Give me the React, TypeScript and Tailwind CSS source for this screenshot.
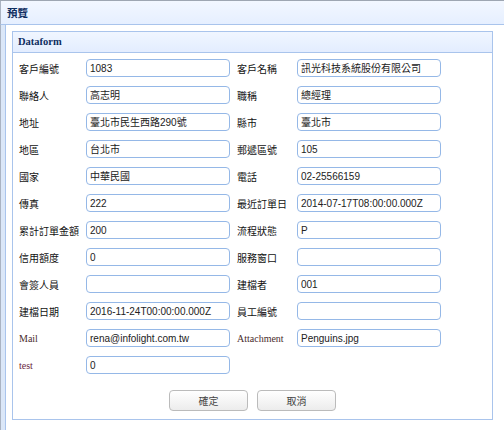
const cjk = "font-['Noto_Sans_CJK_TC','Noto_Sans_CJK_SC',sans-serif]"
const latin = "font-['Liberation_Sans','Noto_Sans_CJK_TC',sans-serif]"

type Field = { label: string; value: string; serif?: boolean; color?: string }

const rows: [Field, Field | null][] = [
  [{ label: '客戶編號', value: '1083' }, { label: '客戶名稱', value: '訊光科技系統股份有限公司' }],
  [{ label: '聯絡人', value: '高志明' }, { label: '職稱', value: '總經理' }],
  [{ label: '地址', value: '臺北市民生西路290號' }, { label: '縣市', value: '臺北市' }],
  [{ label: '地區', value: '台北市' }, { label: '郵遞區號', value: '105' }],
  [{ label: '國家', value: '中華民國' }, { label: '電話', value: '02-25566159' }],
  [{ label: '傳真', value: '222' }, { label: '最近訂單日', value: '2014-07-17T08:00:00.000Z' }],
  [{ label: '累計訂單金額', value: '200' }, { label: '流程狀態', value: 'P' }],
  [{ label: '信用額度', value: '0' }, { label: '服務窗口', value: '' }],
  [{ label: '會簽人員', value: '' }, { label: '建檔者', value: '001' }],
  [{ label: '建檔日期', value: '2016-11-24T00:00:00.000Z' }, { label: '員工編號', value: '' }],
  [
    { label: 'Mail', value: 'rena@infolight.com.tw', serif: true, color: 'text-[#4a2c2c]' },
    { label: 'Attachment', value: 'Penguins.jpg', serif: true, color: 'text-[#4a2c2c]' },
  ],
  [{ label: 'test', value: '0', serif: true, color: 'text-[#6a1f3c]' }, null],
]

function Label({ field, width }: { field: Field; width: string }) {
  return (
    <div
      className={`${width} h-[18px] flex items-center shrink-0 ${
        field.serif
          ? `font-['Liberation_Serif',serif] text-[10px] ${field.color}`
          : `${cjk} text-[10px] text-[#111]`
      }`}
    >
      {field.label}
    </div>
  )
}

function Box({ value }: { value: string }) {
  return (
    <div
      className={`w-[144px] h-[18px] shrink-0 flex items-center px-[3px] border border-[#95b8e7] rounded-[4px] bg-white text-[10px] text-[#222] whitespace-nowrap overflow-hidden ${latin}`}
    >
      {value}
    </div>
  )
}

export default function App() {
  return (
    <div className="w-[504px] h-[430px] bg-white flex flex-col overflow-hidden border-t border-[#9ea6b2]">
      <div className="h-[24px] shrink-0 flex items-center pl-[6px] border-l border-[#aab3c2] border-b border-b-[#a9c4ec] bg-linear-to-b from-[#f2f7ff] to-[#e6efff]">
        <span className={`${cjk} text-[10.5px] font-bold text-[#0e2d5f]`}>預覽</span>
      </div>

      <div className="flex-1 flex">
        <div className="w-[5px] shrink-0 border-l border-[#aab3c2] bg-[#dbe7f8]" />
        <div className="flex-1 border-l border-[#a9c4ec] pl-[6px] pt-[6px]">
          <div className="w-[481px] h-[389px] border border-[#a9c4ec] flex flex-col">
            <div className="h-[21px] shrink-0 flex items-center pl-[5px] border-b border-[#a9c4ec] bg-linear-to-b from-[#f0f6ff] to-[#e3edff]">
              <span className="font-['Liberation_Serif',serif] text-[10.5px] font-bold text-[#0e2d5f]">Dataform</span>
            </div>

            <div className="flex flex-col pl-[6px] pt-[6px]">
              {rows.map(([left, right], i) => (
                <div key={i} className="h-[27px] flex items-start">
                  <Label field={left} width="w-[67px]" />
                  <Box value={left.value} />
                  {right && (
                    <>
                      <div className="w-[7px] shrink-0" />
                      <Label field={right} width="w-[60px]" />
                      <Box value={right.value} />
                    </>
                  )}
                </div>
              ))}
            </div>

            <div className="flex justify-center gap-[9px] pt-[7px]">
              {['確定', '取消'].map((t) => (
                <div
                  key={t}
                  className={`w-[79px] h-[21px] flex items-center justify-center border border-[#bbbbbb] rounded-[4px] bg-linear-to-b from-white to-[#ececec] text-[10px] text-[#444] ${cjk}`}
                >
                  {t}
                </div>
              ))}
            </div>
          </div>
        </div>
      </div>
    </div>
  )
}
